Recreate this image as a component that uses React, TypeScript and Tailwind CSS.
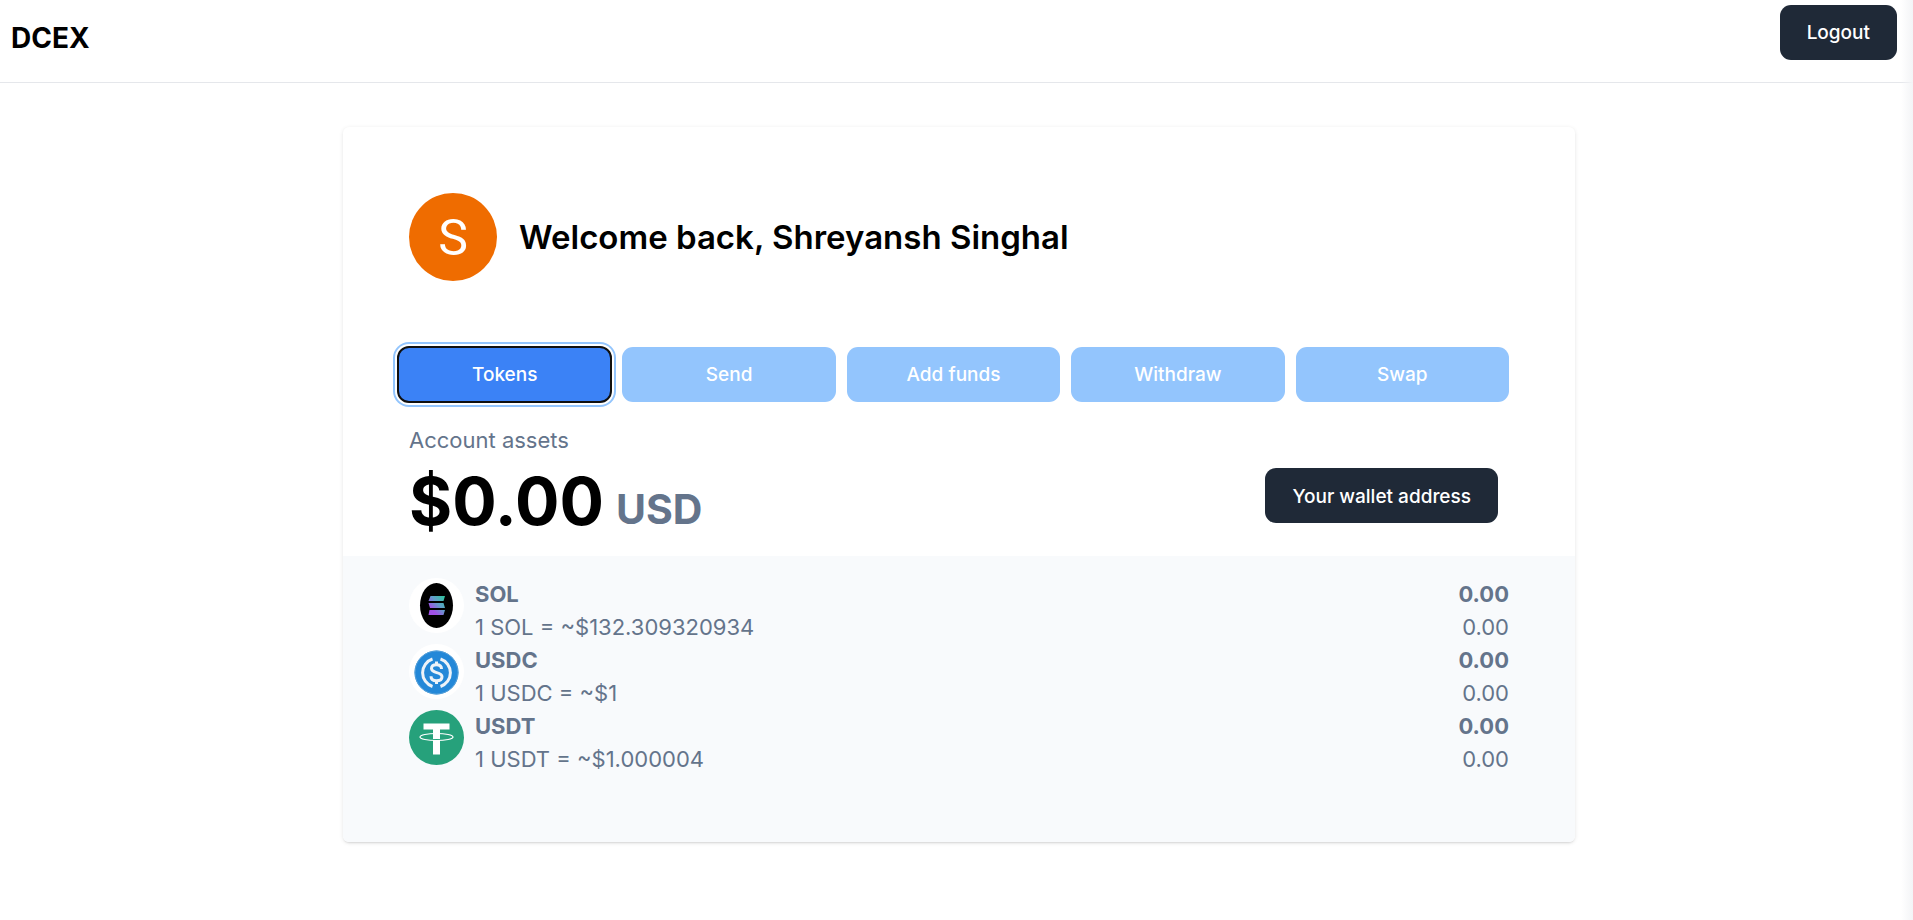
import React, { useState } from 'react';
import { clsx } from 'clsx';

type Tab = 'tokens' | 'send' | 'add_funds' | 'withdraw' | 'swap';

const tabs: { id: Tab; name: string }[] = [
    { id: 'tokens', name: 'Tokens' },
    { id: 'send', name: 'Send' },
    { id: 'add_funds', name: 'Add funds' },
    { id: 'withdraw', name: 'Withdraw' },
    { id: 'swap', name: 'Swap' },
];

const SolIcon = () => (
    <svg viewBox="0 0 55 55" className="size-[55px] shrink-0" aria-hidden="true">
        <defs>
            <linearGradient id="sol" x1="0" y1="1" x2="1" y2="0">
                <stop offset="0.25" stopColor="#a050e6" />
                <stop offset="0.6" stopColor="#5f9fc8" />
                <stop offset="1" stopColor="#2cc69a" />
            </linearGradient>
        </defs>
        <circle cx="27.5" cy="27.5" r="27.5" fill="#fff" />
        <ellipse cx="27.5" cy="27.5" rx="16.5" ry="22.5" fill="#000" />
        <path
            fill="url(#sol)"
            d="M21.5 18H36l-1.500 5H19.500zM19.500 25H34.500l1.500 5H21zM20.500 32H36l-1.500 5H19.500z"
        />
    </svg>
);

const UsdcIcon = () => (
    <svg viewBox="0 0 55 55" className="size-[55px] shrink-0" aria-hidden="true">
        <circle cx="27.5" cy="27.5" r="27.5" fill="#fff" />
        <circle cx="27.5" cy="28.500" r="22" fill="#2488d8" />
        <circle cx="27.5" cy="28.500" r="21.500" fill="none" stroke="#5aa2d8" />
        <g fill="none" stroke="#eef3f8" strokeWidth="3">
            <path d="M23.5 15a14.500 14.500 0 0 0 0 27.500" />
            <path d="M31.5 15a14.500 14.500 0 0 1 0 27.500" />
            <path d="M32.500 25c0-2.800-2-4.200-5-4.200s-5 1.500-5 3.800c0 5.200 10.500 2.800 10.500 8.200 0 2.600-2.200 4-5.500 4s-5.500-1.500-5.500-4.500" />
            <path d="M27.500 17.500v3.500M27.500 36.500v3.500" />
        </g>
    </svg>
);

const UsdtIcon = () => (
    <svg viewBox="0 0 55 55" className="size-[55px] shrink-0" aria-hidden="true">
        <circle cx="27.5" cy="27.5" r="27.5" fill="#26a17b" />
        <path fill="#fff" d="M14.500 13.500h26v6h-9.500v25h-7v-25h-9.500z" />
        <path d="M24 29.500h7" stroke="#26a17b" />
        <ellipse cx="27.5" cy="27" rx="16.500" ry="3.500" fill="none" stroke="#fff" strokeWidth="1.200" />
    </svg>
);

const tokens = [
    { name: 'SOL', price: '132.309320934', balance: '0.00', usd: '0.00', icon: <SolIcon /> },
    { name: 'USDC', price: '1', balance: '0.00', usd: '0.00', icon: <UsdcIcon /> },
    { name: 'USDT', price: '1.000004', balance: '0.00', usd: '0.00', icon: <UsdtIcon /> },
];

const DarkButton = ({ children }: { children: React.ReactNode }) => (
    <button
        type="button"
        className="h-[55px] rounded-[11px] bg-[#1f2937] px-[27px] pt-0.5 text-[19px] font-medium text-white hover:bg-[#111827]"
    >
        {children}
    </button>
);

const Appbar = () => (
    <header className="flex items-start justify-between border-b border-gray-200 pt-[5px] pr-4 pb-[22px] pl-[11px]">
        <div className="pt-3 text-[28px] leading-[42px] font-bold">DCEX</div>
        <DarkButton>Logout</DarkButton>
    </header>
);

const Greeting = ({ name }: { name: string }) => (
    <div className="flex items-center p-[66px]">
        <div className="mr-[22px] flex size-[88px] shrink-0 items-center justify-center rounded-full bg-[#ef6c00] pt-0.5 font-[Roboto] text-[50px] text-white">
            {name[0]}
        </div>
        <h1 className="text-[33px] leading-[44px] font-semibold">Welcome back, {name}</h1>
    </div>
);

const TokenRow = ({ token }: { token: (typeof tokens)[number] }) => (
    <li className="flex items-start justify-between">
        <div className="flex gap-[11px]">
            {token.icon}
            <div>
                <div className="font-bold">{token.name}</div>
                <div>
                    1 {token.name} = ~${token.price}
                </div>
            </div>
        </div>
        <div className="text-right">
            <div className="font-bold">{token.balance}</div>
            <div>{token.usd}</div>
        </div>
    </li>
);

const Assets = () => (
    <section className="text-[22px] leading-[33px] text-[#64748b]">
        <div className="px-[66px] pt-[22px]">
            <h2>Account assets</h2>
            <div className="flex items-start justify-between pt-[11px] pr-[11px] pb-[22px]">
                <div className="flex items-end">
                    <div className="text-[66px] leading-[66px] font-bold text-black">$0.00</div>
                    <div className="pl-3 text-[41px] leading-[50px] font-bold">USD</div>
                </div>
                <DarkButton>Your wallet address</DarkButton>
            </div>
        </div>
        <ul className="bg-[#f8fafc] px-[66px] pt-[22px] pb-[66px]">
            {tokens.map((token) => (
                <TokenRow key={token.name} token={token} />
            ))}
        </ul>
    </section>
);

export default function App() {
    const [selectedTab, setSelectedTab] = useState<Tab>('tokens');

    return (
        <div className="relative min-h-screen bg-white font-[Inter,sans-serif] text-black">
            <Appbar />
            <main className="flex justify-center pt-[44px] pl-[5px]">
                <div className="w-full max-w-[1232px] overflow-hidden rounded-md bg-white shadow-[0_1px_4px_rgba(0,0,0,0.1),0_2px_2px_-1px_rgba(0,0,0,0.1)]">
                    <Greeting name="Shreyansh Singhal" />
                    <nav className="flex gap-[11px] pr-[66px] pl-[55px]">
                        {tabs.map((tab) => (
                            <button
                                key={tab.id}
                                type="button"
                                onClick={() => setSelectedTab(tab.id)}
                                className={clsx(
                                    'h-[55px] flex-1 rounded-[11px] pt-0.5 text-[19px] font-medium text-white',
                                    tab.id === selectedTab
                                        ? 'bg-[#3b82f6] shadow-[0_0_0_3px_#fff,0_0_0_5px_#93c5fd] outline-2 -outline-offset-1 outline-[#101010]'
                                        : 'bg-[#93c5fd]',
                                )}
                            >
                                {tab.name}
                            </button>
                        ))}
                    </nav>
                    <Assets />
                </div>
            </main>
            <div className="pointer-events-none absolute inset-y-0 right-0 w-3 bg-gradient-to-r from-transparent to-gray-100" />
        </div>
    );
}
